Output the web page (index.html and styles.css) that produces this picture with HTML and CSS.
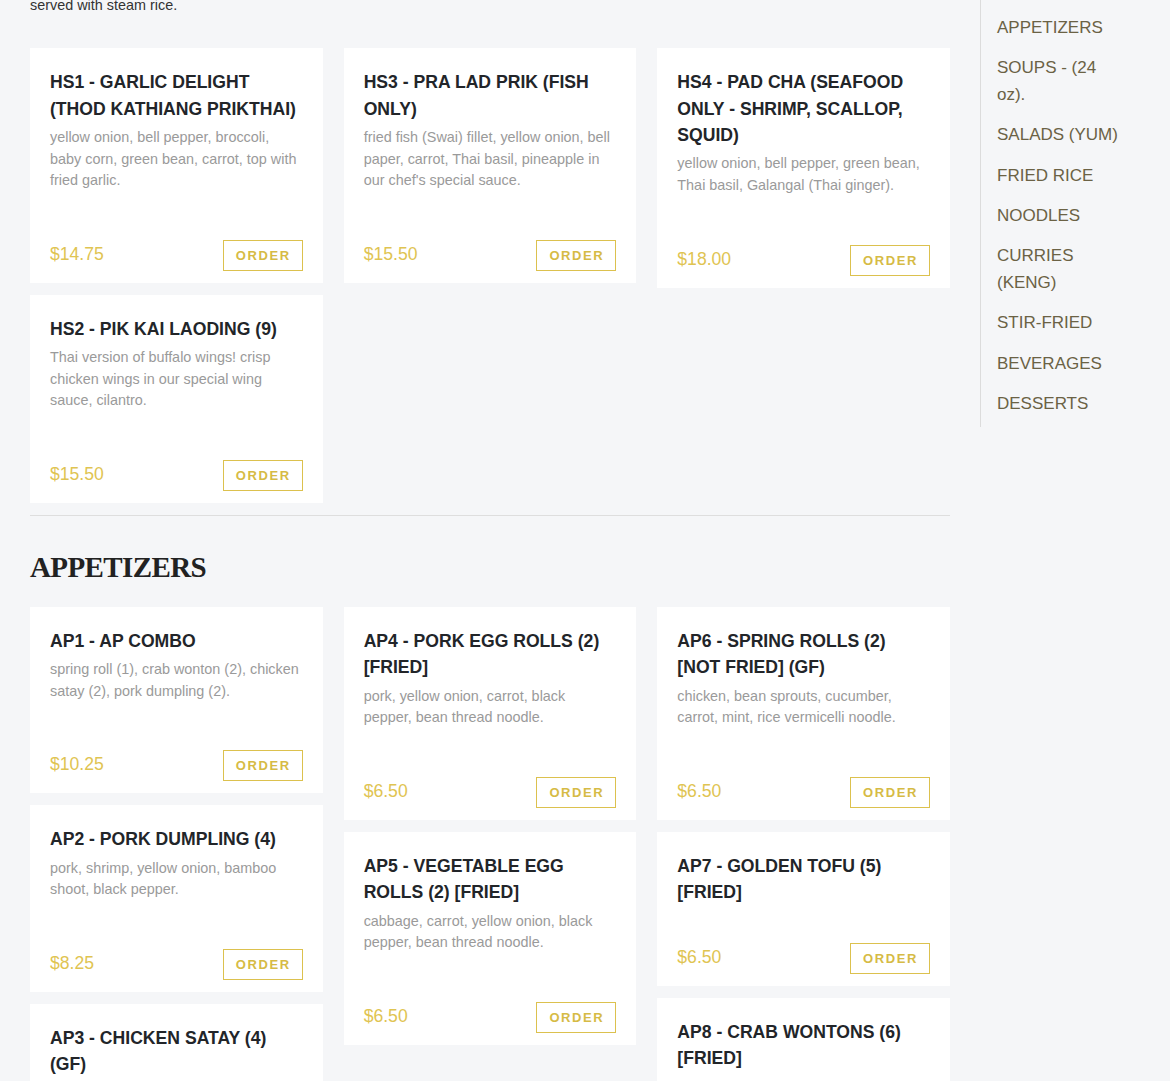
FILE: index.html
```html
<!DOCTYPE html>
<html lang="en">
<head>
<meta charset="utf-8">
<title>Menu</title>
<link rel="stylesheet" href="styles.css">
</head>
<body>
<div class="page">
  <main class="menu">
    <section class="category">
      <p class="cat-note">served with steam rice.</p>
      <div class="grid">
        <div class="col">
          <article class="card">
            <h3 class="card-title">HS1 - Garlic Delight (Thod Kathiang Prikthai)</h3>
            <p class="card-desc">yellow onion, bell pepper, broccoli, baby corn, green bean, carrot, top with fried garlic.</p>
            <div class="card-foot"><span class="price">$14.75</span><button class="order">ORDER</button></div>
          </article>
          <article class="card">
            <h3 class="card-title">HS2 - Pik Kai Laoding (9)</h3>
            <p class="card-desc">Thai version of buffalo wings! crisp chicken wings in our special wing sauce, cilantro.</p>
            <div class="card-foot"><span class="price">$15.50</span><button class="order">ORDER</button></div>
          </article>
        </div>
        <div class="col">
          <article class="card">
            <h3 class="card-title">HS3 - Pra Lad Prik (Fish only)</h3>
            <p class="card-desc">fried fish (Swai) fillet, yellow onion, bell paper, carrot, Thai basil, pineapple in our chef's special sauce.</p>
            <div class="card-foot"><span class="price">$15.50</span><button class="order">ORDER</button></div>
          </article>
        </div>
        <div class="col">
          <article class="card">
            <h3 class="card-title">HS4 - Pad Cha (Seafood only - shrimp, scallop, squid)</h3>
            <p class="card-desc">yellow onion, bell pepper, green bean, Thai basil, Galangal (Thai ginger).</p>
            <div class="card-foot"><span class="price">$18.00</span><button class="order">ORDER</button></div>
          </article>
        </div>
      </div>
    </section>

    <hr class="divider">

    <section class="category">
      <h2 class="cat-title">APPETIZERS</h2>
      <div class="grid">
        <div class="col">
          <article class="card">
            <h3 class="card-title">AP1 - AP Combo</h3>
            <p class="card-desc">spring roll (1), crab wonton (2), chicken satay (2), pork dumpling (2).</p>
            <div class="card-foot"><span class="price">$10.25</span><button class="order">ORDER</button></div>
          </article>
          <article class="card">
            <h3 class="card-title">AP2 - Pork Dumpling (4)</h3>
            <p class="card-desc">pork, shrimp, yellow onion, bamboo shoot, black pepper.</p>
            <div class="card-foot"><span class="price">$8.25</span><button class="order">ORDER</button></div>
          </article>
          <article class="card">
            <h3 class="card-title">AP3 - Chicken Satay (4) (GF)</h3>
            <p class="card-desc">marinated chicken skewers, peanut sauce, cucumber salad.</p>
            <div class="card-foot"><span class="price">$9.25</span><button class="order">ORDER</button></div>
          </article>
        </div>
        <div class="col">
          <article class="card">
            <h3 class="card-title">AP4 - Pork Egg Rolls (2) [Fried]</h3>
            <p class="card-desc">pork, yellow onion, carrot, black pepper, bean thread noodle.</p>
            <div class="card-foot"><span class="price">$6.50</span><button class="order">ORDER</button></div>
          </article>
          <article class="card">
            <h3 class="card-title">AP5 - Vegetable Egg Rolls (2) [Fried]</h3>
            <p class="card-desc">cabbage, carrot, yellow onion, black pepper, bean thread noodle.</p>
            <div class="card-foot"><span class="price">$6.50</span><button class="order">ORDER</button></div>
          </article>
        </div>
        <div class="col">
          <article class="card">
            <h3 class="card-title">AP6 - Spring Rolls (2) [Not Fried] (GF)</h3>
            <p class="card-desc">chicken, bean sprouts, cucumber, carrot, mint, rice vermicelli noodle.</p>
            <div class="card-foot"><span class="price">$6.50</span><button class="order">ORDER</button></div>
          </article>
          <article class="card">
            <h3 class="card-title">AP7 - Golden Tofu (5) [Fried]</h3>
            <div class="card-foot"><span class="price">$6.50</span><button class="order">ORDER</button></div>
          </article>
          <article class="card">
            <h3 class="card-title">AP8 - Crab Wontons (6) [Fried]</h3>
            <p class="card-desc">crab meat, cream cheese, green onion.</p>
            <div class="card-foot"><span class="price">$7.50</span><button class="order">ORDER</button></div>
          </article>
        </div>
      </div>
    </section>
  </main>

  <aside class="sidebar">
    <ul class="cat-nav">
      <li><a href="#">APPETIZERS</a></li>
      <li><a href="#">SOUPS - (24 oz).</a></li>
      <li><a href="#">SALADS (YUM)</a></li>
      <li><a href="#">FRIED RICE</a></li>
      <li><a href="#">NOODLES</a></li>
      <li><a href="#">CURRIES (KENG)</a></li>
      <li><a href="#">STIR-FRIED</a></li>
      <li><a href="#">BEVERAGES</a></li>
      <li><a href="#">DESSERTS</a></li>
    </ul>
  </aside>
</div>
</body>
</html>
```

FILE: styles.css
```css
* {
  box-sizing: border-box;
}

html, body {
  margin: 0;
  padding: 0;
  background: #f5f6f8;
}

body {
  font-family: "Liberation Sans", Arial, sans-serif;
  color: #222;
}

.page {
  display: flex;
  align-items: flex-start;
  gap: 30px;
  padding: 0 30px;
}

.menu {
  width: 920px;
  flex: none;
  margin-top: -5.5px;
}

.cat-note {
  margin: 0 0 32px;
  font-size: 14.4px;
  line-height: 21.6px;
  color: #333;
}

.grid {
  display: grid;
  grid-template-columns: repeat(3, 1fr);
  column-gap: 21px;
  align-items: start;
}

.col {
  display: flex;
  flex-direction: column;
}

.card {
  display: flex;
  flex-direction: column;
  background: #fff;
  padding: 21px 20px 12px;
  margin-bottom: 12px;
}

.card-title {
  margin: 0;
  font-size: 17.6px;
  line-height: 26.4px;
  font-weight: 700;
  text-transform: uppercase;
  color: #222529;
}

.card-desc {
  margin: 5px 0 12px;
  font-size: 14.4px;
  line-height: 21.6px;
  color: #9a9a9a;
}

.card-foot {
  margin-top: 36px;
  display: flex;
  justify-content: space-between;
  align-items: baseline;
}

.card-title + .card-foot {
  margin-top: 37px;
}

.price {
  font-size: 17.6px;
  line-height: 26.4px;
  color: #dfc452;
}

.order {
  font-family: "Liberation Sans", Arial, sans-serif;
  font-size: 13px;
  font-weight: 700;
  line-height: 29px;
  letter-spacing: 1.6px;
  padding: 0 11px 0 12px;
  background: #fff;
  border: 1px solid #dcc14e;
  color: #d6bb45;
  border-radius: 0;
  cursor: pointer;
}

.divider {
  margin: 0;
  border: 0;
  border-top: 1px solid #dedede;
}

.cat-title {
  margin: 33px 0 22px;
  font-family: "Liberation Serif", "Times New Roman", serif;
  font-weight: 700;
  font-size: 29px;
  line-height: 36px;
  letter-spacing: -0.6px;
  color: #222;
}

.sidebar {
  flex: none;
  width: 145px;
  border-left: 1px solid #dcdcdc;
  padding: 8px 0 3px 16px;
}

.cat-nav {
  list-style: none;
  margin: 0;
  padding: 0;
}

.cat-nav li {
  padding: 7px 0;
  font-size: 17px;
  line-height: 26.4px;
}

.cat-nav a {
  color: #6b6245;
  text-decoration: none;
}
```
